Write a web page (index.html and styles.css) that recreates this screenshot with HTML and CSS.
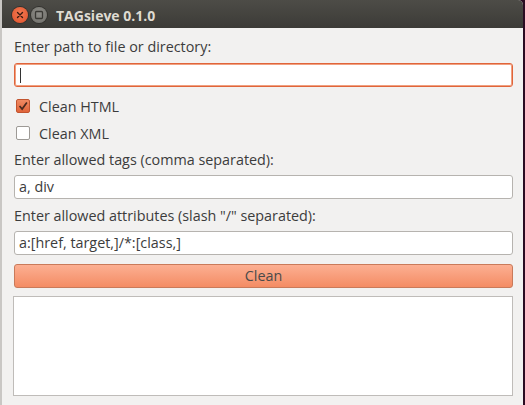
FILE: index.html
```html
<!DOCTYPE html>
<html>
<head>
<meta charset="utf-8">
<link rel="stylesheet" href="styles.css">
</head>
<body>
<div class="desktop">
  <div class="window">
    <div class="titlebar">
      <div class="wbtn close">
        <svg width="16" height="16" viewBox="0 0 16 16"><path d="M5.5 5.5 L10.5 10.5 M10.5 5.5 L5.5 10.5" stroke="#3b1a10" stroke-width="1.4" stroke-linecap="round"/></svg>
      </div>
      <div class="wbtn maxi">
        <svg width="16" height="16" viewBox="0 0 16 16"><rect x="4.5" y="4.5" width="7" height="7" rx="1" fill="none" stroke="#3a3935" stroke-width="1.3"/></svg>
      </div>
      <div class="title">TAGsieve 0.1.0</div>
    </div>
    <div class="content">
      <div class="label l1">Enter path to file or directory:</div>
      <div class="input focused"><span class="caret"></span></div>
      <div class="check c1">
        <span class="box checked">
          <svg width="14" height="14" viewBox="0 0 14 14"><path d="M3 7 L6 10.5 L11.5 3" fill="none" stroke="#4a2a1e" stroke-width="2"/></svg>
        </span>
        <span class="ctext">Clean HTML</span>
      </div>
      <div class="check c2">
        <span class="box"></span>
        <span class="ctext">Clean XML</span>
      </div>
      <div class="label l2">Enter allowed tags (comma separated):</div>
      <div class="input">a, div</div>
      <div class="label l2">Enter allowed attributes (slash "/" separated):</div>
      <div class="input">a:[href, target,]/*:[class,]</div>
      <div class="button">Clean</div>
      <div class="output"></div>
    </div>
  </div>
</div>
</body>
</html>
```

FILE: styles.css
```css
html, body {
  margin: 0;
  padding: 0;
}
body {
  width: 525px;
  height: 405px;
  overflow: hidden;
  font-family: "Open Sans", "DejaVu Sans", sans-serif;
}
.desktop {
  width: 525px;
  height: 405px;
  background: #2b0b22;
  display: flex;
}
.window {
  width: 521px;
  height: 405px;
  border-left: 2px solid #c9c7c4;
  background: #f2f1f0;
  display: flex;
  flex-direction: column;
  border-top-right-radius: 5px;
  overflow: hidden;
}
.titlebar {
  height: 28px;
  flex: none;
  background: linear-gradient(#4d4c47, #3c3b37);
  display: flex;
  align-items: center;
  padding-left: 10px;
  box-sizing: border-box;
  padding-top: 2px;
}
.wbtn {
  width: 16px;
  height: 16px;
  border-radius: 50%;
  display: flex;
  align-items: center;
  justify-content: center;
  margin-right: 3px;
}
.close {
  background: radial-gradient(circle at 50% 40%, #f37a52, #e0502a);
  box-shadow: 0 0 0 1px #33322e;
}
.maxi {
  background: radial-gradient(circle at 50% 40%, #8f8e89, #6e6d68);
  box-shadow: 0 0 0 1px #33322e;
}
.title {
  color: #dfdbd2;
  font-weight: bold;
  font-size: 14px;
  margin-left: 6px;
  font-family: "Open Sans", "DejaVu Sans", sans-serif;
}
.content {
  padding: 9px 10px 0 12px;
  display: flex;
  flex-direction: column;
  color: #3c3c3c;
  font-size: 14.35px;
}
.label {
  height: 20px;
  line-height: 20px;
}
.l1 { margin-bottom: 6px; }
.l2 { margin-top: 7px; margin-bottom: 5px; }
.input {
  height: 24px;
  box-sizing: border-box;
  border: 1px solid #b6b3af;
  border-radius: 3px;
  background: #fff;
  line-height: 22px;
  padding-left: 4px;
  display: flex;
  align-items: center;
}
.input.focused {
  border-color: #e0643a;
  box-shadow: inset 0 0 0 1px #f0a080;
}
.caret {
  width: 1px;
  height: 15px;
  background: #333;
  margin-left: 1px;
}
.check {
  height: 20px;
  display: flex;
  align-items: center;
  padding-left: 2px;
}
.c1 { margin-top: 9px; }
.c2 { margin-top: 7px; }
.box {
  width: 14px;
  height: 14px;
  box-sizing: border-box;
  border: 1px solid #9d9a96;
  border-radius: 2px;
  background: #fff;
  display: flex;
  align-items: center;
  justify-content: center;
  margin-right: 9px;
}
.box.checked {
  border-color: #c2542f;
  background: linear-gradient(#f08a62, #e0643a);
}
.button {
  margin-top: 9px;
  height: 24px;
  box-sizing: border-box;
  border: 1px solid #c97a5a;
  border-radius: 3px;
  background: linear-gradient(#fcaf92, #f48c64);
  text-align: center;
  line-height: 22px;
  color: #4a4a4a;
}
.output {
  margin-top: 8px;
  margin-left: -1px;
  height: 100px;
  box-sizing: border-box;
  border: 1px solid #bfbcb9;
  background: #fff;
}
```
